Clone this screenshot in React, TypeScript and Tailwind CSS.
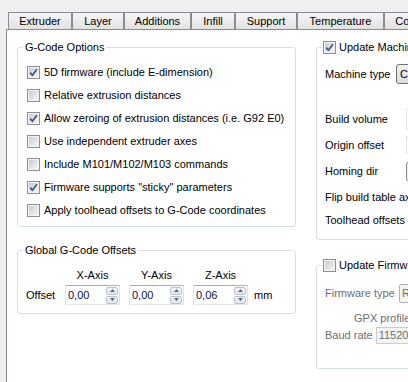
import type { ReactNode } from 'react';

const tabs = [
  { label: 'Extruder', w: 'w-[64px]' },
  { label: 'Layer', w: 'w-[52px]' },
  { label: 'Additions', w: 'w-[67px]' },
  { label: 'Infill', w: 'w-[44px]' },
  { label: 'Support', w: 'w-[62px]' },
  { label: 'Temperature', w: 'w-[87px]' },
  { label: 'Cooling', w: 'w-[60px]' },
];

const gcodeOptions = [
  { label: '5D firmware (include E-dimension)', checked: true },
  { label: 'Relative extrusion distances', checked: false },
  { label: 'Allow zeroing of extrusion distances (i.e. G92 E0)', checked: true },
  { label: 'Use independent extruder axes', checked: false },
  { label: 'Include M101/M102/M103 commands', checked: false },
  { label: 'Firmware supports "sticky" parameters', checked: true },
  { label: 'Apply toolhead offsets to G-Code coordinates', checked: false },
];

const offsets = [
  { axis: 'X-Axis', value: '0,00' },
  { axis: 'Y-Axis', value: '0,00' },
  { axis: 'Z-Axis', value: '0,06' },
];

function Checkbox({ checked }: { checked: boolean }) {
  return (
    <span className="block w-[13px] h-[13px] shrink-0 border border-[#8e8f8f] bg-[#f4f4f4] p-[1px]">
      <span className="flex w-full h-full items-center justify-center bg-linear-to-br from-[#c9ccd2] to-[#f6f6f6]">
        {checked && (
          <svg width="9" height="9" viewBox="0 0 9 9">
            <path d="M1.2 4.6 L3.4 7.2 L7.9 1.3" fill="none" stroke="#3d5390" strokeWidth="1.7" />
          </svg>
        )}
      </span>
    </span>
  );
}

function GroupBox({ title, children, className = '' }: { title: ReactNode; children: ReactNode; className?: string }) {
  return (
    <fieldset className={`border border-[#d5dfe5] rounded-[3px] ${className}`}>
      <legend className="ml-[5px] px-[2px] leading-[16px] whitespace-nowrap">{title}</legend>
      {children}
    </fieldset>
  );
}

function SpinBox({ value }: { value: string }) {
  return (
    <div className="flex w-[55px] h-[20px] items-center border border-[#abadb3] border-l-[#e2e3ea] border-r-[#dbdfe6] border-b-[#e3e9ef] bg-white">
      <span className="flex-1 pl-[2px] text-[#10103a]">{value}</span>
      <div className="flex flex-col gap-[1px] pr-[1px]">
        <span className="flex w-[12px] h-[8px] items-center justify-center border border-[#b8c2cc] rounded-[2px] bg-linear-to-b from-[#f4f4f4] to-[#e1e4e8]">
          <svg width="5" height="3" viewBox="0 0 5 3">
            <path d="M0 3 L2.5 0 L5 3 Z" fill="#4e6a8c" />
          </svg>
        </span>
        <span className="flex w-[12px] h-[8px] items-center justify-center border border-[#b8c2cc] rounded-[2px] bg-linear-to-b from-[#f4f4f4] to-[#e1e4e8]">
          <svg width="5" height="3" viewBox="0 0 5 3">
            <path d="M0 0 L2.5 3 L5 0 Z" fill="#4e6a8c" />
          </svg>
        </span>
      </div>
    </div>
  );
}

export default function App() {
  return (
    <div className="w-[408px] h-[382px] overflow-hidden bg-[#f0f0f0] text-[11px] text-black font-['Liberation_Sans',Arial,sans-serif]">
      <div className="flex h-[29px] pl-[8px] pt-[12px]">
        {tabs.map((tab) => (
          <div
            key={tab.label}
            className={`${tab.w} shrink-0 h-[17px] flex items-center justify-center border border-b-0 border-[#898c95] bg-linear-to-b from-[#f6f6f6] to-[#e2e2e2] leading-none`}
          >
            {tab.label}
          </div>
        ))}
      </div>

      <div className="ml-[6px] h-[353px] flex gap-[20px] bg-white border-l border-t border-[#898c95] pl-[10px] pt-[9px]">
        <div className="w-[279px] shrink-0 flex flex-col">
          <GroupBox title="G-Code Options" className="pb-[4px]">
            <div className="mt-[6px] pl-[9px] flex flex-col">
              {gcodeOptions.map((opt) => (
                <div key={opt.label} className="h-[23px] flex items-center gap-[4px]">
                  <Checkbox checked={opt.checked} />
                  <span>{opt.label}</span>
                </div>
              ))}
            </div>
          </GroupBox>

          <GroupBox title="Global G-Code Offsets" className="mt-[15px] pb-[8px]">
            <div className="mt-[9px] pl-[8px] flex flex-col gap-[2px]">
              <div className="flex h-[16px] items-center">
                <span className="w-[39px]" />
                {offsets.map((o) => (
                  <span key={o.axis} className="w-[55px] mr-[9px] text-center">
                    {o.axis}
                  </span>
                ))}
              </div>
              <div className="flex h-[20px] items-center">
                <span className="w-[39px]">Offset</span>
                {offsets.map((o) => (
                  <div key={o.axis} className="mr-[9px]">
                    <SpinBox value={o.value} />
                  </div>
                ))}
                <span className="-ml-[3px]">mm</span>
              </div>
            </div>
          </GroupBox>
        </div>

        <div className="w-[210px] shrink-0 flex flex-col whitespace-nowrap">
          <GroupBox
            title={
              <span className="flex items-center gap-[3px] -ml-[1px]">
                <Checkbox checked />
                <span>Update Machine Settings</span>
              </span>
            }
            className="pb-[8px]"
          >
            <div className="pl-[8px] flex flex-col">
              <div className="mt-[8px] h-[22px] flex items-center">
                <span className="w-[71px] shrink-0">Machine type</span>
                <span className="h-[20px] flex-1 flex items-center pl-[3px] border border-[#707070] rounded-[3px] bg-linear-to-b from-[#f2f2f2] to-[#dddddd]">
                  Cartesian
                </span>
              </div>
              <div className="mt-[23px] h-[22px] flex items-center">
                <span className="w-[81px] shrink-0">Build volume</span>
                <span className="h-[20px] flex-1 border border-[#e0e3e8] bg-white" />
              </div>
              <div className="mt-[4px] h-[22px] flex items-center">
                <span className="w-[81px] shrink-0">Origin offset</span>
                <span className="h-[18px] flex-1 border border-[#e0e3e8] bg-white" />
              </div>
              <div className="mt-[4px] h-[22px] flex items-center">
                <span className="w-[81px] shrink-0">Homing dir</span>
                <span className="h-[19px] flex-1 border border-[#8a8a8a] rounded-[2px] bg-[#f4f4f4]" />
              </div>
              <div className="mt-[4px] h-[22px] flex items-center">
                <span>Flip build table axis</span>
              </div>
              <div className="mt-[1px] h-[22px] flex items-center">
                <span>Toolhead offsets</span>
              </div>
            </div>
          </GroupBox>

          <GroupBox
            title={
              <span className="flex items-center gap-[3px] -ml-[1px]">
                <Checkbox checked={false} />
                <span>Update Firmware Settings</span>
              </span>
            }
            className="mt-[17px] pb-[24px]"
          >
            <div className="pl-[8px] flex flex-col text-[#6d6d6d]">
              <div className="mt-[10px] h-[20px] flex items-center">
                <span className="w-[74px] shrink-0">Firmware type</span>
                <span className="h-[19px] flex-1 flex items-center pl-[2px] border border-[#adb2b5] rounded-[2px] bg-[#f4f4f4]">
                  RepRap
                </span>
              </div>
              <div className="mt-[7px] h-[16px] flex items-center pl-[29px]">GPX profile</div>
              <div className="h-[18px] flex items-center">
                <span className="shrink-0 mr-[3px]">Baud rate</span>
                <span className="h-[17px] flex-1 flex items-center pl-[2px] border border-[#c9cdd2] bg-[#f4f4f4]">
                  115200
                </span>
              </div>
            </div>
          </GroupBox>
        </div>
      </div>
    </div>
  );
}
